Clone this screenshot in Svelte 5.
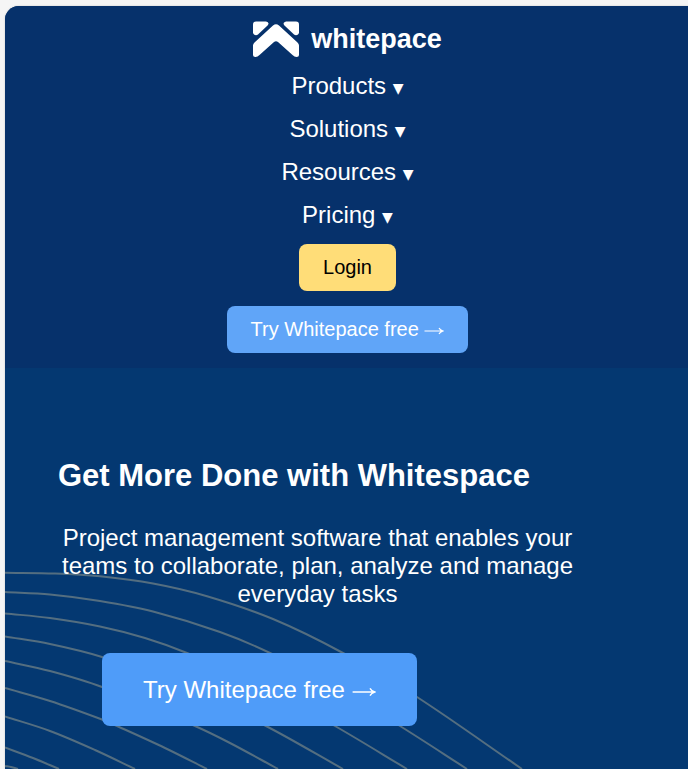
<script>
  const menu = ['Products', 'Solutions', 'Resources', 'Pricing'];

  // Contour lines behind the hero, in a 683 x 401 area
  const contours = [
    [[0, 204.7], [50, 205.5], [95, 208.3], [148, 215.5], [202, 228.2], [268, 251], [338, 285], [412, 329], [517, 401]],
    [[0, 224], [45, 226.5], [95, 233], [148, 243.5], [215, 264], [265, 285], [330, 319], [395, 358], [462, 401]],
    [[0, 245.5], [45, 250], [95, 258.5], [140, 270], [182, 285], [257, 318], [330, 358], [402, 401]],
    [[0, 268.5], [45, 276], [97, 289], [180, 319], [261, 358], [338, 401]],
    [[0, 293], [45, 303], [97, 319], [190, 358], [225, 375], [273, 401]],
    [[0, 320], [45, 333], [97, 351.5], [112, 358], [160, 380], [202, 401]],
    [[0, 348.5], [45, 363], [90, 382], [130, 401]],
    [[0, 379.5], [28, 390], [54, 401]],
    [[0, 398], [6, 399], [13, 401]]
  ];

  function smooth(points) {
    let d = `M${points[0].join(' ')}`;
    for (let i = 0; i < points.length - 1; i++) {
      const a = points[i - 1] ?? points[i];
      const b = points[i];
      const c = points[i + 1];
      const e = points[i + 2] ?? c;
      const w = c[0] - b[0];
      const s1 = (c[1] - a[1]) / (c[0] - a[0]);
      const s2 = (e[1] - b[1]) / (e[0] - b[0]);
      d += ` C${b[0] + w / 3} ${b[1] + (s1 * w) / 3} ${c[0] - w / 3} ${c[1] - (s2 * w) / 3} ${c[0]} ${c[1]}`;
    }
    return d;
  }
</script>

{#snippet arrow()}
  {' '}<svg class="arrow" viewBox="0 0 20 20" aria-hidden="true">
    <path d="M0.500 15H18.500M15 12Q16 14 19 15Q16 16 15 18" />
  </svg>
{/snippet}

<div class="page">
  <header>
    <a class="brand" href="#home">
      <svg width="46" height="36" viewBox="0 -0.5 46 36" fill="#fff" aria-hidden="true">
        <path d="M3 0H13Q17 1 14.500 4L5 13Q3 14.500 1 13Q0 12 0 11V3Q0 0 3 0Z" />
        <path d="M43 0H33Q29 1 31.500 4L41 13Q43 14.500 45 13Q46 12 46 11V3Q46 0 43 0Z" />
        <path d="M20 4Q23 1.500 26 4L44.500 21Q46 22.500 46 24V33Q46 35.500 43.500 35.500Q41.500 35.500 39.500 33.500L25 20.500Q23 19 21 20.500L6.500 33.500Q4.500 35.500 2.500 35.500Q0 35.500 0 33V24Q0 22.500 1.500 21Z" />
      </svg>
      <span>whitepace</span>
    </a>
    <nav>
      {#each menu as item}
        <a href="#{item.toLowerCase()}">{item} <span class="caret">▼</span></a>
      {/each}
    </nav>
    <button class="login">Login</button>
    <button class="trial">Try Whitepace free{@render arrow()}</button>
  </header>

  <main>
    <svg class="contours" viewBox="0 0 683 401" preserveAspectRatio="xMinYMin slice" aria-hidden="true">
      {#each contours as line}
        <path d={smooth(line)} />
      {/each}
    </svg>
    <section>
      <h1>Get More Done with Whitespace</h1>
      <p>Project management software that enables your teams to collaborate, plan, analyze and manage everyday tasks</p>
      <button class="cta">Try Whitepace free{@render arrow()}</button>
    </section>
  </main>
</div>

<style>
  :global(body) {
    background: #f5f5f5;
    overflow: hidden;
  }
  .page {
    margin: 6px -2px 0 5px;
    border-radius: 14px 0 0 0;
    overflow: hidden;
    background: #043871;
    box-shadow: 0 0 2px #0003;
    color: #fff;
    font-family: "Liberation Sans", Arial, sans-serif;
  }
  header {
    display: flex;
    flex-direction: column;
    align-items: center;
    padding: 14px 0 15px;
    background: #06316b;
  }
  a {
    color: inherit;
    text-decoration: none;
  }
  .brand {
    display: flex;
    align-items: center;
    gap: 12px;
    height: 38px;
    font-size: 27px;
    font-weight: 700;
  }
  nav {
    display: flex;
    flex-direction: column;
    align-items: center;
    gap: 15px;
    padding: 14px 0 15px;
    font-size: 24px;
    line-height: 28px;
  }
  .caret {
    font-family: "DejaVu Sans", sans-serif;
    font-size: 14px;
    line-height: 1;
    vertical-align: 1px;
  }
  button {
    border: 0;
    color: #fff;
    font-family: inherit;
    cursor: pointer;
  }
  .login,
  .trial {
    padding: 12px 24px;
    border-radius: 8px;
    font-size: 20px;
    line-height: 23px;
  }
  .login {
    margin-bottom: 15px;
    background: #ffdd78;
    color: #000;
  }
  .trial {
    background: #60a5f8;
  }
  .arrow {
    width: 1em;
    height: 1em;
    margin-top: -4px;
    vertical-align: baseline;
    fill: none;
    stroke: currentColor;
    stroke-width: 1.2;
  }
  main {
    position: relative;
    min-height: 401px;
  }
  .contours {
    position: absolute;
    top: 0;
    left: 0;
    width: 683px;
    height: 401px;
    fill: none;
    stroke: #546e80;
    stroke-width: 2;
  }
  section {
    position: relative;
    padding: 88px 48px 43px;
  }
  h1 {
    margin: 0 5px;
    font-size: 31px;
    line-height: 40px;
  }
  p {
    max-width: 529px;
    margin: 28px 0 45px;
    font-size: 24px;
    line-height: 28px;
    text-align: center;
  }
  .cta {
    margin-left: 49px;
    padding: 23px 41px 22px;
    border-radius: 8px;
    background: #4f9cf9;
    font-size: 24px;
    line-height: 28px;
  }
</style>
